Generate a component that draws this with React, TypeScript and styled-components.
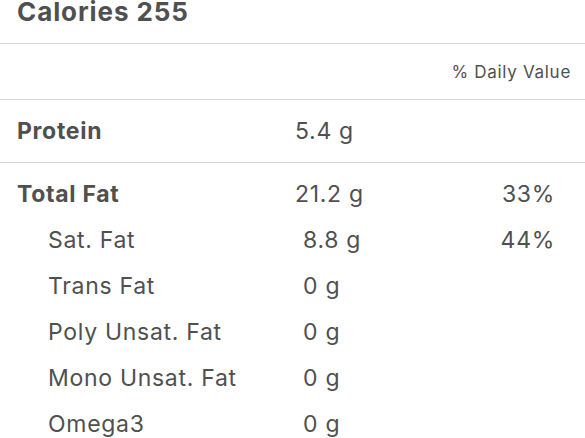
import { createGlobalStyle } from "styled-components";
import styled from "styled-components";

const GlobalStyle = createGlobalStyle`
  html, body {
    margin: 0;
    padding: 0;
    background: #ffffff;
  }
  body {
    font-family: Inter, "Liberation Sans", sans-serif;
    color: #505050;
    overflow: hidden;
  }
`;

const Page = styled.div`
  width: 585px;
  height: 438px;
  overflow: hidden;
  background: #ffffff;
`;

const TitleBar = styled.div`
  height: 44px;
  padding-left: 17px;
  border-bottom: 1px solid #d8d8d8;
  box-sizing: border-box;
`;

const Title = styled.h1`
  margin: 0;
  font-size: 26px;
  line-height: 24px;
  font-weight: 700;
  letter-spacing: 0.9px;
`;

const HeaderRow = styled.div`
  height: 56px;
  display: flex;
  align-items: center;
  justify-content: flex-end;
  padding-right: 14px;
  border-bottom: 1px solid #d8d8d8;
  box-sizing: border-box;
  font-size: 17px;
  letter-spacing: 0.7px;
`;

const Section = styled.div<{ $padTop?: number }>`
  padding-top: ${(p) => p.$padTop ?? 0}px;
  border-bottom: 1px solid #d8d8d8;

  &:last-child {
    border-bottom: none;
  }
`;

const Row = styled.div<{ $sub?: boolean; $height?: number }>`
  height: ${(p) => p.$height ?? 46}px;
  display: grid;
  grid-template-columns: ${(p) => (p.$sub ? "255px" : "278px")} 1fr 80px;
  align-items: center;
  padding-left: ${(p) => (p.$sub ? 48 : 17)}px;
  padding-right: 30px;
  font-size: 23px;
  letter-spacing: 0.7px;
  font-weight: ${(p) => (p.$sub ? 400 : 700)};
`;

const Value = styled.span`
  font-weight: 400;
`;

const Percent = styled.span`
  font-weight: 400;
  text-align: right;
`;

type Nutrient = {
  name: string;
  amount: string;
  percent?: string;
  sub?: boolean;
};

const fats: Nutrient[] = [
  { name: "Total Fat", amount: "21.2 g", percent: "33%" },
  { name: "Sat. Fat", amount: "8.8 g", percent: "44%", sub: true },
  { name: "Trans Fat", amount: "0 g", sub: true },
  { name: "Poly Unsat. Fat", amount: "0 g", sub: true },
  { name: "Mono Unsat. Fat", amount: "0 g", sub: true },
  { name: "Omega3", amount: "0 g", sub: true },
];

function NutrientRow({ name, amount, percent, sub }: Nutrient) {
  return (
    <Row $sub={sub}>
      <span>{name}</span>
      <Value>{amount}</Value>
      <Percent>{percent}</Percent>
    </Row>
  );
}

export default function App() {
  return (
    <Page>
      <GlobalStyle />
      <TitleBar>
        <Title>Calories 255</Title>
      </TitleBar>
      <HeaderRow>% Daily Value</HeaderRow>
      <Section>
        <Row $height={62}>
          <span>Protein</span>
          <Value>5.4 g</Value>
          <Percent />
        </Row>
      </Section>
      <Section $padTop={8}>
        {fats.map((f) => (
          <NutrientRow key={f.name} {...f} />
        ))}
      </Section>
    </Page>
  );
}
